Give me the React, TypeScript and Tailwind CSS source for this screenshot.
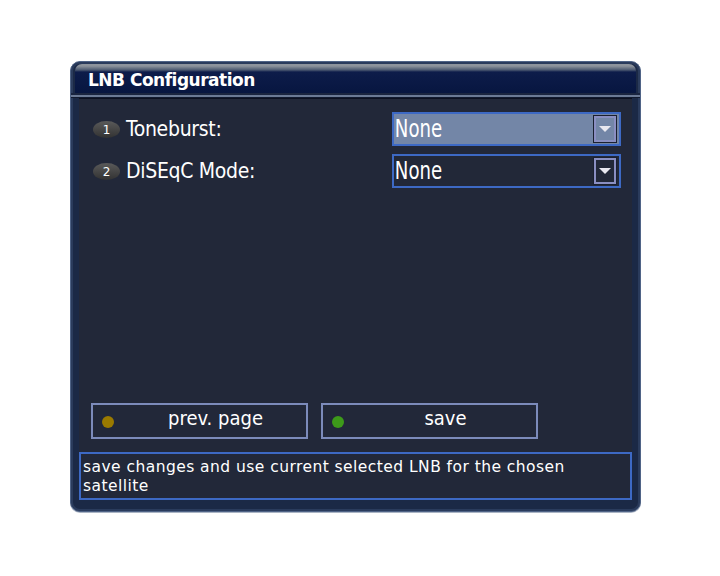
import React from "react";

const cond = { fontFamily: '"DejaVu Sans Condensed","DejaVu Sans",sans-serif' };
const sans = { fontFamily: '"DejaVu Sans",sans-serif' };

function Badge({ n }: { n: string }) {
  return (
    <div className="w-[27px] h-[17px] rounded-[50%] bg-[linear-gradient(to_bottom,#5a5a5a,#323232)] flex items-center justify-center text-[12px] text-white leading-none" style={sans}>
      {n}
    </div>
  );
}

function Select({ active }: { active?: boolean }) {
  return (
    <div className={`w-[229px] h-[34px] border-2 border-[#3d69c4] flex items-center ${active ? "bg-[#7386a7]" : "bg-[#222838]"}`}>
      <span className="flex-1 pl-[1px] text-[24px] text-white leading-none scale-x-[0.84] origin-left" style={cond}>None</span>
      <div className={`mr-[2px] w-[24px] h-[28px] flex items-center justify-center border border-[#1a2030] ${active ? "bg-[#7386a7]" : "bg-[#222838]"}`}>
        <div className="w-[22px] h-[26px] border-2 border-[#8a8fc2] flex items-center justify-center">
          <svg width="12" height="7" viewBox="0 0 12 7"><path d="M0 0H12L6 6Z" fill="#e8e8f0" /></svg>
        </div>
      </div>
    </div>
  );
}

function Row({ n, label, active, mt }: { n: string; label: string; active?: boolean; mt: string }) {
  return (
    <div className={`flex items-center h-[34px] ${mt}`}>
      <div className="ml-[14px] mr-[6px] mt-[1px]"><Badge n={n} /></div>
      <span className="text-[21px] text-white leading-none tracking-[-0.3px]" style={cond}>{label}</span>
      <div className="ml-auto mr-[11px]"><Select active={active} /></div>
    </div>
  );
}

function Button({ color, label }: { color: string; label: string }) {
  return (
    <div className="w-[217px] h-[36px] border-2 border-[#7c8bbb] flex items-center relative">
      <div className="absolute left-[9px] top-[11px] w-[12px] h-[12px] rounded-full" style={{ background: color }} />
      <span className="flex-1 text-center pl-[32px] text-[20px] text-white leading-none -mt-[7px]" style={cond}>{label}</span>
    </div>
  );
}

export default function App() {
  return (
    <div className="w-[720px] h-[576px] bg-white pl-[70px] pt-[61px]">
      <div className="w-[571px] h-[451px] rounded-[10px] bg-[#1b2946] border border-[#4f6386] shadow-[inset_0_0_0_2px_#2a3b5c,0_1px_0_#aab4c4] flex flex-col">
        <div className="mt-[2px] mx-[4px] h-[29px] rounded-t-[7px] bg-[linear-gradient(to_bottom,#8d939c_0px,#8d939c_2px,#4b5870_6px,#0d1c4a_8px,#071640_100%)] flex items-center pl-[13px]">
          <span className="text-[17px] font-bold text-white leading-none mt-[3px] tracking-[-0.5px]" style={sans}>LNB Configuration</span>
        </div>
        <div className="h-[2px] bg-[#1a2540]" />
        <div className="h-[2px] bg-[#6b7a96]" />
        <div className="h-[1px] bg-[#111a30]" />
        <div className="ml-[8px] mr-[8px] h-[402px] bg-[#222839] border-t border-[#0c1020] flex flex-col">
          <Row n="1" label="Toneburst:" active mt="mt-[13px]" />
          <Row n="2" label="DiSEqC Mode:" mt="mt-[8px]" />
          <div className="flex-1" />
          <div className="flex gap-[13px] pl-[12px]">
            <Button color="#9a7a00" label="prev. page" />
            <Button color="#3d9a1a" label="save" />
          </div>
          <div className="mt-[13px] h-[48px] border-2 border-[#3d69c4] px-[2px] pt-[4px] text-[15.5px] text-white leading-[19px] tracking-[0.45px]" style={sans}>
            save changes and use current selected LNB for the chosen<br />satellite
          </div>
        </div>
      </div>
    </div>
  );
}
